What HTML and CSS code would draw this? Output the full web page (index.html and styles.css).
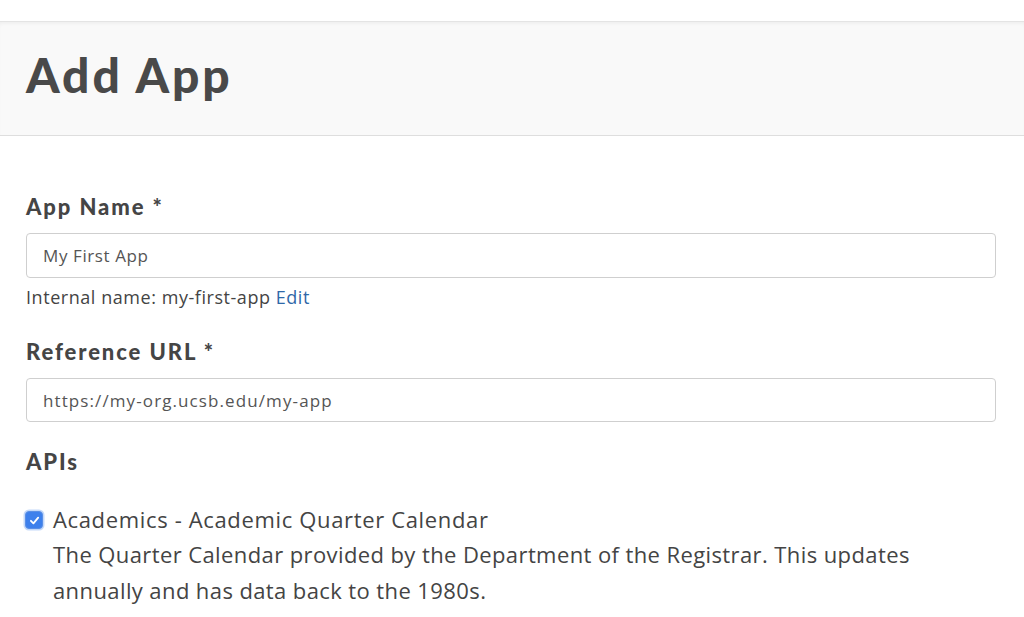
FILE: index.html
```html
<!DOCTYPE html>
<html>
<head>
<meta charset="utf-8">
<link rel="stylesheet" href="styles.css">
</head>
<body>
<div class="topgap"></div>
<header class="page-header">
  <h1>Add App</h1>
</header>
<main class="form">
  <div class="field field-name">
    <label class="label">App Name *</label>
    <input class="input" type="text" value="My First App">
    <div class="help">Internal name: my-first-app <a href="#">Edit</a></div>
  </div>
  <div class="field field-url">
    <label class="label">Reference URL *</label>
    <input class="input input-url" type="text" value="https://my-org.ucsb.edu/my-app">
  </div>
  <div class="field field-apis">
    <div class="label">APIs</div>
    <div class="api">
      <span class="check">
        <svg width="13" height="13" viewBox="0 0 12 12"><path d="M2.7 6.3 L5 8.6 L9.4 3.4" fill="none" stroke="#fff" stroke-width="1.7" stroke-linecap="round" stroke-linejoin="round"/></svg>
      </span>
      <div class="api-text">
        <div class="api-name">Academics - Academic Quarter Calendar</div>
        <div class="api-desc">The Quarter Calendar provided by the Department of the Registrar. This updates annually and has data back to the 1980s.</div>
      </div>
    </div>
  </div>
</main>
</body>
</html>
```
FILE: styles.css
```css
html, body { margin: 0; padding: 0; background: #fff; }
body { font-family: "Open Sans", "Lato", sans-serif; color: #444; }
.topgap { height: 21px; background: #fff; }
.page-header {
  background: #f9f9f9;
  border-top: 1px solid #e4e4e4;
  border-bottom: 1px solid #dedede;
  box-shadow: inset 0 3px 4px -2px rgba(0,0,0,0.06);
  height: 115px;
  display: flex;
  align-items: center;
  padding: 0 26px;
  box-sizing: border-box;
}
.page-header h1 {
  margin: 0;
  font-family: "Lato", sans-serif;
  font-weight: 900;
  font-size: 48px;
  color: #494949;
  letter-spacing: 2.9px;
  line-height: 1;
  position: relative;
  top: -4px;
}
.form { padding: 58px 28px 0 26px; }
.field { margin: 0; }
.label {
  display: block;
  font-family: "Lato", sans-serif;
  font-weight: 900;
  font-size: 22px;
  color: #454545;
  letter-spacing: 1.9px;
  line-height: 26px;
  margin-bottom: 13px;
}
.input {
  display: block;
  width: 100%;
  box-sizing: border-box;
  height: 45px;
  border: 1px solid #cfcfcf;
  border-radius: 4px;
  padding: 0 16px;
  font-family: "Open Sans", sans-serif;
  font-size: 17px;
  letter-spacing: 0.6px;
  color: #555;
  background: #fff;
  outline: none;
}
.input-url { letter-spacing: 1.1px; height: 44px; }
.help {
  margin-top: 7px;
  font-family: "Open Sans", sans-serif;
  font-size: 18px;
  letter-spacing: 0.55px;
  color: #444;
  line-height: 24px;
}
.help a { color: #2f68a8; text-decoration: none; }
.field-url { margin-top: 30px; }
.field-apis { margin-top: 27px; }
.api { display: flex; align-items: flex-start; margin-top: 27px; }
.check {
  width: 18px; height: 18px;
  background: #3d80ec;
  border: 1px solid #5a8fe6;
  border-radius: 4px;
  box-sizing: border-box;
  display: flex; align-items: center; justify-content: center;
  margin-top: 9px;
  margin-left: -1px;
  margin-right: 10px;
  box-shadow: 0 0 0 1.5px rgba(61,128,236,0.3);
}
.api-text { font-family: "Open Sans", sans-serif; font-size: 22px; letter-spacing: 0.4px; color: #444; line-height: 36px; }
.api-name { line-height: 34px; letter-spacing: 0.65px; }
.api-desc { max-width: 880px; }
```
